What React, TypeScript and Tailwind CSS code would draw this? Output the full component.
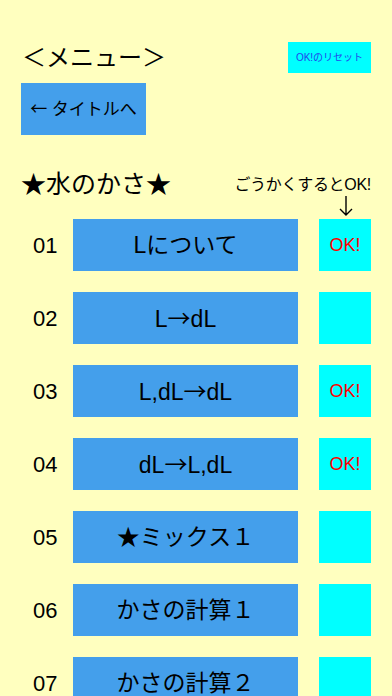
const cjk = { fontFamily: '"Noto Sans CJK JP", sans-serif' };

function Label({ text }: { text: string }) {
  const parts = text.split(/(→)/);
  return (
    <>
      {parts.map((p, i) =>
        p === '→' ? (
          <span key={i} style={cjk}>
            →
          </span>
        ) : (
          <span key={i}>{p}</span>
        ),
      )}
    </>
  );
}

const rows = [
  { no: '01', label: 'Lについて', ok: true },
  { no: '02', label: 'L→dL', ok: false },
  { no: '03', label: 'L,dL→dL', ok: true },
  { no: '04', label: 'dL→L,dL', ok: true },
  { no: '05', label: '★ミックス１', ok: false },
  { no: '06', label: 'かさの計算１', ok: false },
  { no: '07', label: 'かさの計算２', ok: false },
];

export default function App() {
  return (
    <div
      className="w-[392px] h-[696px] overflow-hidden bg-[#ffffbf] text-black"
      style={{ fontFamily: '"Liberation Sans", "Noto Sans CJK JP", sans-serif' }}
    >
      <div className="flex items-center justify-between pl-[22px] pr-[21px] pt-[42px]">
        <h1 className="text-[24px] leading-[31px]">＜メニュー＞</h1>
        <button className="w-[83px] h-[31px] bg-[#00ffff] text-[10px] text-[#2244ee]">OK!のリセット</button>
      </div>

      <button className="ml-[21px] mt-[10px] w-[125px] h-[52px] bg-[#449feb] text-[17px]">
        <span style={cjk}>←</span> タイトルへ
      </button>

      <div className="flex items-end justify-between pl-[21px] pr-[21px] mt-[35px]">
        <h2 className="text-[25px] leading-[28px]">★水のかさ★</h2>
        <div className="text-[16px] leading-[18px] tracking-[-0.3px] mb-[4px]">ごうかくするとOK!</div>
      </div>
      <div className="flex justify-end pr-[39px] h-[21px]">
        <svg width="14" height="21" viewBox="0 0 14 21" className="mt-[-2px]">
          <path d="M7 0V19M1 13L7 19L13 13" stroke="#000" strokeWidth="1.4" fill="none" />
        </svg>
      </div>

      <div className="flex flex-col gap-[21px]">
        {rows.map((r) => (
          <div key={r.no} className="flex items-center h-[52px]">
            <div className="w-[73px] pl-[33px] text-[22px]">{r.no}</div>
            <button className="w-[225px] h-[52px] bg-[#449feb] text-[23px]">
              <Label text={r.label} />
            </button>
            <div className="ml-[21px] w-[52px] h-[52px] bg-[#00ffff] flex items-center justify-center text-[18px] text-[#ff0000]">
              {r.ok ? 'OK!' : ''}
            </div>
          </div>
        ))}
      </div>
    </div>
  );
}
